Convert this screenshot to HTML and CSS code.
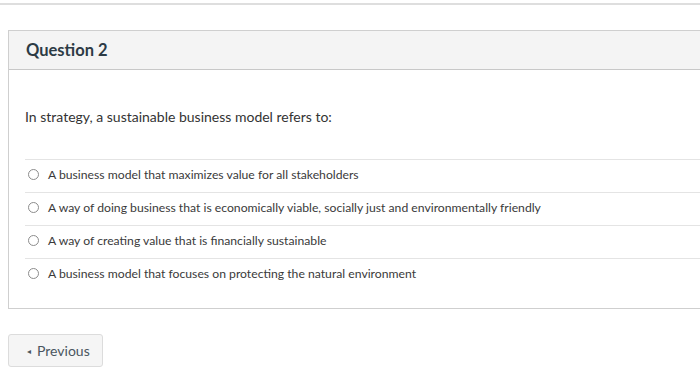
FILE: index.html
```html
<!DOCTYPE html>
<html lang="en">
<head>
    <meta charset="UTF-8">
    <meta name="viewport" content="width=device-width, initial-scale=1.0">
    <title>Quiz</title>
    <link rel="stylesheet" href="styles.css">
</head>
<body>
    <div class="top-rule"></div>
    <div class="question">
        <div class="question-header">
            <h2>Question 2</h2>
        </div>
        <div class="question-body">
            <p class="question-text">In strategy, a sustainable business model refers to:</p>
            <div class="answers">
                <label class="answer"><span class="radio"></span>A business model that maximizes value for all stakeholders</label>
                <label class="answer"><span class="radio"></span>A way of doing business that is economically viable, socially just and environmentally friendly</label>
                <label class="answer"><span class="radio"></span>A way of creating value that is financially sustainable</label>
                <label class="answer"><span class="radio"></span>A business model that focuses on protecting the natural environment</label>
            </div>
        </div>
    </div>
    <div class="nav">
        <button class="prev-btn"><span class="arrow">&#9666;</span>Previous</button>
    </div>
</body>
</html>
```

FILE: styles.css
```css
html, body {
    margin: 0;
    padding: 0;
    overflow: hidden;
    background: #fff;
}
body {
    font-family: Lato, "Open Sans", sans-serif;
    color: #2d3b45;
}
.top-rule {
    margin-top: 3px;
    height: 2px;
    background: #dedede;
}
.question {
    margin: 25px 0 0 8px;
    width: 720px;
    border: 1px solid #cfcfcf;
    border-right: none;
}
.question-header {
    height: 38px;
    background: #f4f4f4;
    border-bottom: 1px solid #c8c8c8;
    display: flex;
    align-items: center;
    padding-left: 17px;
}
.question-header h2 {
    margin: 0;
    font-size: 16.5px;
    font-weight: 700;
    color: #2d3b45;
}
.question-body {
    padding: 38px 0 17px 16px;
}
.question-text {
    margin: 0 0 33px 0;
    font-size: 14px;
    line-height: 18px;
    color: #333;
}
.answers {
    display: flex;
    flex-direction: column;
}
.answer {
    box-sizing: border-box;
    display: flex;
    align-items: center;
    height: 33px;
    padding-bottom: 3px;
    border-top: 1px solid #e4e4e4;
    font-size: 12.2px;
    color: #3a3a3a;
}
.radio {
    width: 9px;
    height: 9px;
    border: 1px solid #8c8c8c;
    border-radius: 50%;
    margin: 0 9px 0 3px;
}
.nav {
    padding: 25px 0 0 8px;
}
.prev-btn {
    display: flex;
    align-items: center;
    width: 95px;
    height: 33px;
    padding: 0 0 0 18px;
    background: #f5f5f5;
    border: 1px solid #dcdcdc;
    border-radius: 3px;
    font-family: Lato, "Open Sans", sans-serif;
    font-size: 14px;
    color: #4a5560;
}
.arrow {
    font-size: 8px;
    margin-right: 6px;
}
```
